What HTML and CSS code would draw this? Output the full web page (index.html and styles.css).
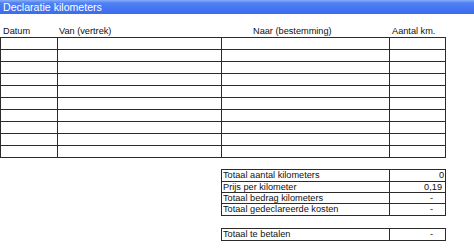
FILE: index.html
```html
<!DOCTYPE html>
<html lang="nl">
<head>
    <meta charset="UTF-8">
    <title>Declaratie kilometers</title>
    <link rel="stylesheet" href="styles.css">
</head>
<body>
    <div class="titlebar">Declaratie kilometers</div>

    <div class="heads">
        <span class="h-datum">Datum</span>
        <span class="h-van">Van (vertrek)</span>
        <span class="h-naar">Naar (bestemming)</span>
        <span class="h-km">Aantal km.</span>
    </div>

    <!-- ritten: 10 lege regels -->
    <div class="rides">
        <div></div><div></div><div></div><div></div>
        <div></div><div></div><div></div><div></div>
        <div></div><div></div><div></div><div></div>
        <div></div><div></div><div></div><div></div>
        <div></div><div></div><div></div><div></div>
        <div></div><div></div><div></div><div></div>
        <div></div><div></div><div></div><div></div>
        <div></div><div></div><div></div><div></div>
        <div></div><div></div><div></div><div></div>
        <div></div><div></div><div></div><div></div>
    </div>

    <div class="totals">
        <div class="label r1">Totaal aantal kilometers</div>
        <div class="value num r1">0</div>
        <div class="label">Prijs per kilometer</div>
        <div class="value price">0,19</div>
        <div class="label">Totaal bedrag kilometers</div>
        <div class="value dash">-</div>
        <div class="label r1">Totaal gedeclareerde kosten</div>
        <div class="value dash r1">-</div>
    </div>

    <div class="totals pay">
        <div class="label">Totaal te betalen</div>
        <div class="value dash">-</div>
    </div>
</body>
</html>
```

FILE: styles.css
```css
body {
    margin: 0;
    padding: 0;
    background: #fff;
    font-family: "Liberation Sans", Arial, sans-serif;
    font-size: 9.2px;
    color: #111;
}
.titlebar {
    height: 14px;
    line-height: 14px;
    padding-left: 3px;
    font-size: 10.6px;
    color: #fff;
    background: linear-gradient(#86aef8 0, #4f80f3 3px, #3a6cf0 100%);
}
.heads {
    display: grid;
    grid-template-columns: 58px 164px 168px 56px;
    height: 12px;
    line-height: 12px;
    margin-top: 11px;
}
.h-datum { padding-left: 3px; }
.h-van { padding-left: 1px; }
.h-naar { padding-left: 31px; }
.h-km { padding-left: 2px; }
.rides {
    display: grid;
    grid-template-columns: 56px 163px 167px 55px;
    grid-auto-rows: 11px;
    gap: 1px;
    padding: 1px;
    width: max-content;
    background: #2b2b2b;
}
.rides div {
    background: #fff;
}
.totals {
    display: grid;
    grid-template-columns: 167px 55px;
    grid-template-rows: 11px 10px 10px 11px;
    gap: 1px;
    padding: 1px;
    width: max-content;
    margin: 11px 0 0 221px;
    background: #2b2b2b;
    line-height: 10px;
}
.totals.pay {
    grid-template-rows: 11px;
    margin-top: 12px;
}
.totals div {
    background: #fff;
    white-space: nowrap;
}
.totals .r1 {
    line-height: 11px;
}
.label {
    padding-left: 1px;
}
.value {
    text-align: right;
}
.num { padding-right: 1px; }
.price { padding-right: 3px; }
.dash { padding-right: 12px; }
```
